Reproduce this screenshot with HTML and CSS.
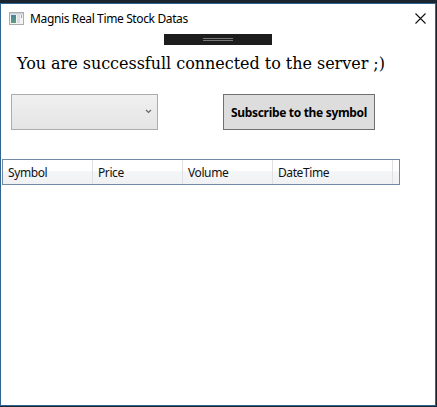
FILE: index.html
```html
<!DOCTYPE html>
<html lang="en">
<head>
<meta charset="utf-8">
<title>Magnis Real Time Stock Datas</title>
<link rel="stylesheet" href="styles.css">
</head>
<body>
<main class="window">
  <header class="titlebar">
    <svg class="app-icon" width="15" height="13" viewBox="0 0 15 13">
      <rect x=".5" y=".5" width="14" height="12" fill="#f4f4f4" stroke="#a9adb0"/>
      <rect x="1" y="1" width="13" height="1.5" fill="#c9d0d6"/>
      <defs><linearGradient id="pane" x2="0" y2="1"><stop stop-color="#4a7fa0"/><stop offset="1" stop-color="#5fa07c"/></linearGradient></defs>
      <rect x="2" y="3" width="5" height="8" fill="url(#pane)"/>
      <rect x="8" y="3" width="3" height="8" fill="#dcdfe1"/>
      <rect x="12" y="3" width="1" height="3" fill="#9aa5ac"/>
    </svg>
    <h1 class="title">Magnis Real Time Stock Datas</h1>
    <svg class="close" width="11" height="11" viewBox="0 0 11 11"><path d="M.5 .5l10 10M10.500 .5l-10 10" stroke="#111" stroke-width="1.100"/></svg>
  </header>
  <div class="grip"><span class="grip-lines"></span></div>
  <p class="status">You are successfull connected to the server ;)</p>
  <div class="controls">
    <div class="combo"><svg width="7" height="5" viewBox="0 0 7 5"><path d="M1 1l2.500 2.500L6 1" fill="none" stroke="#666" stroke-width="1.200"/></svg></div>
    <button class="subscribe"><span>Subscribe to the symbol</span></button>
  </div>
  <div class="grid-head">
    <div class="col symbol">Symbol</div>
    <div class="col price">Price</div>
    <div class="col volume">Volume</div>
    <div class="col datetime">DateTime</div>
  </div>
</main>
</body>
</html>
```
FILE: styles.css
```css
* { box-sizing: border-box; }
body {
  margin: 0;
  height: 407px;
  padding: 3px 1px 1px 0;
  background: #1b2530;
  overflow: hidden;
  font: 12px/16px "Noto Sans", sans-serif;
  color: #111;
}
.window {
  height: 403px;
  background: #fff;
  border: 1px solid #2f6593;
}
.titlebar { display: flex; align-items: center; height: 29px; padding: 0 9px 0 8px; }
.app-icon { margin-top: -1px; }
.title { margin: 0 auto 0 6px; font-size: 12px; font-weight: 400; letter-spacing: -.37px; color: #000; }
.close { display: block; margin-top: -1px; }
.grip {
  width: 108px;
  height: 11px;
  margin: 1px 0 0 163px;
  padding: 4px 0 0 39px;
  background: #1d1d1e;
}
.grip-lines { display: block; width: 30px; height: 3px; border: solid #777; border-width: 1px 0; }
.status {
  height: 24px;
  margin: 7px 0 0 16px;
  font: 16px/24px "DejaVu Serif", serif;
  letter-spacing: -.03px;
  white-space: nowrap;
  color: #000;
}
.controls { display: flex; gap: 65px; margin: 18px 0 0 10px; }
.combo {
  display: flex;
  align-items: center;
  justify-content: flex-end;
  width: 147px;
  height: 36px;
  padding: 0 5px 2px 0;
  border: 1px solid #acacac;
  background: linear-gradient(#f0f0f0, #e4e4e4);
}
.subscribe {
  width: 152px;
  height: 36px;
  padding: 2px 0 0;
  border: 1px solid #707070;
  background: #ddd;
  font: bold 12px/16px "Noto Sans", sans-serif;
  letter-spacing: -.32px;
  white-space: nowrap;
  color: #000;
}
.grid-head {
  display: flex;
  width: 398px;
  height: 26px;
  margin: 29px 0 0 1px;
  border: 1px solid #718ba6;
  background: linear-gradient(#fff 0 45%, #f5f6f8 46%, #eff1f3);
  letter-spacing: -.4px;
}
.col { width: 90px; padding: 5px 0 0 5px; border-right: 1px solid #dfe0e1; }
.datetime { width: 120px; }
```
